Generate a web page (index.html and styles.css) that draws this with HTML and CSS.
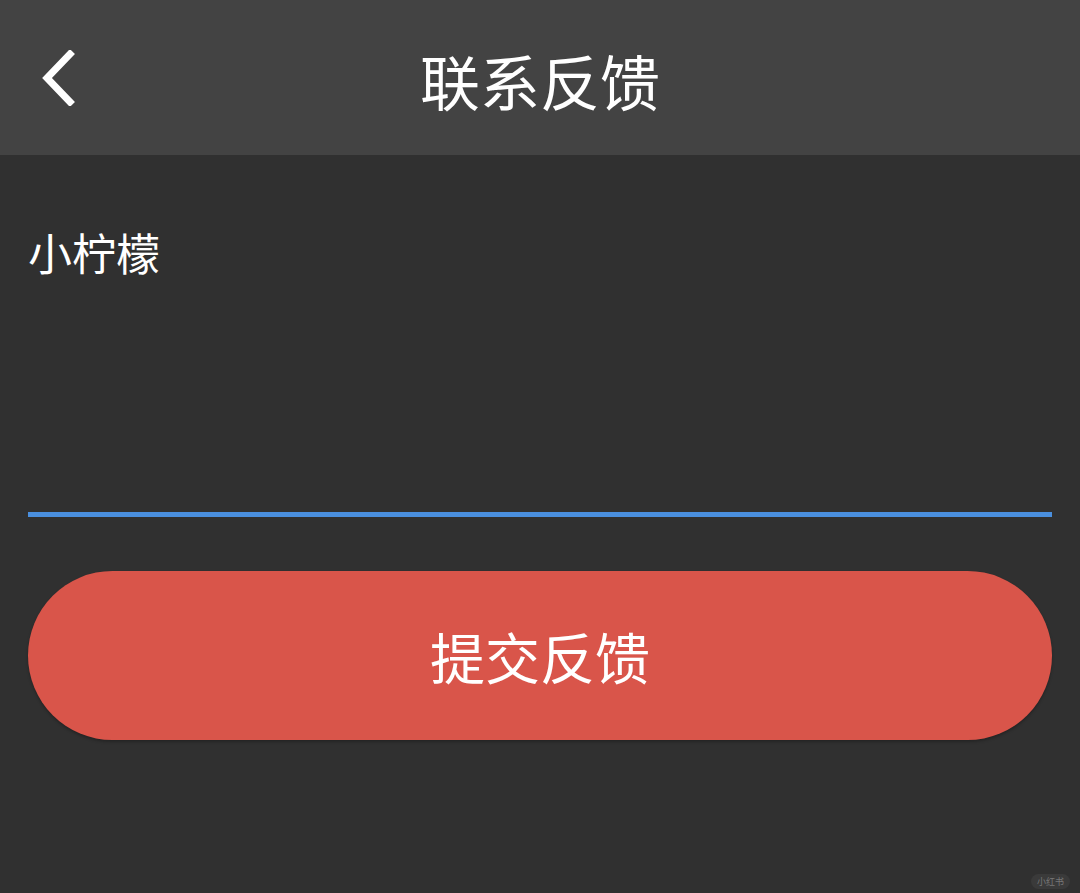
FILE: index.html
```html
<!DOCTYPE html>
<html lang="zh">
<head>
<meta charset="utf-8">
<link rel="stylesheet" href="styles.css">
</head>
<body>
<div class="page">
  <header class="topbar">
    <div class="back">
      <svg width="40" height="56" viewBox="0 0 40 56"><polyline points="32,4 9,28 32,52" fill="none" stroke="#ffffff" stroke-width="7" stroke-linecap="square" stroke-linejoin="miter"/></svg>
    </div>
    <h1 class="title">联系反馈</h1>
  </header>
  <main class="content">
    <div class="field">
      <div class="field-text">小柠檬</div>
    </div>
    <button class="submit">提交反馈</button>
  </main>
  <div class="mark">小红书</div>
</div>
</body>
</html>
```
FILE: styles.css
```css
html, body {
  margin: 0;
  padding: 0;
  background: #303030;
}
.page {
  width: 1080px;
  height: 893px;
  position: relative;
  overflow: hidden;
  font-family: "Noto Sans CJK SC", "Noto Sans", sans-serif;
  color: #ffffff;
}
.topbar {
  height: 155px;
  background: #434343;
  position: relative;
  display: flex;
  align-items: center;
  justify-content: center;
}
.back {
  position: absolute;
  left: 38px;
  top: 50px;
  width: 40px;
  height: 56px;
}
.back svg { display: block; }
.title {
  margin: 0;
  font-size: 60px;
  font-weight: 400;
  line-height: 1;
  padding-top: 4px;
}
.content {
  padding: 0 28px;
}
.field {
  height: 362px;
  border-bottom: 5px solid #4a8fde;
  box-sizing: border-box;
  padding-top: 71px;
}
.field-text {
  font-size: 44px;
  line-height: 1.2;
}
.submit {
  display: block;
  margin-top: 54px;
  width: 100%;
  height: 169px;
  border: none;
  border-radius: 85px;
  background: #d9554a;
  color: #ffffff;
  font-family: "Noto Sans CJK SC", "Noto Sans", sans-serif;
  font-size: 55px;
  line-height: 1;
  padding: 0;
  box-shadow: 0 2px 3px rgba(0,0,0,0.25);
}
.mark {
  position: absolute;
  right: 10px;
  bottom: 4px;
  font-size: 9px;
  color: #777;
  background: #3a3a3a;
  border-radius: 8px;
  padding: 3px 6px;
  line-height: 1;
}
```
